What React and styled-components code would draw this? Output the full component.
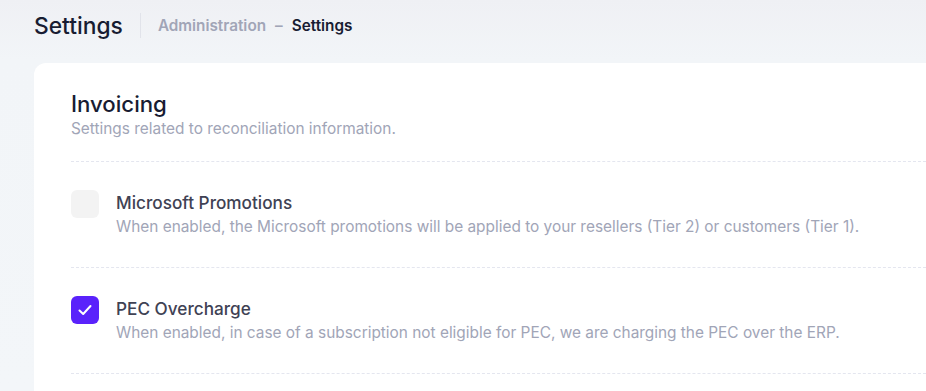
import React from "react";
import styled, { createGlobalStyle } from "styled-components";

const Global = createGlobalStyle`
  html, body { margin: 0; padding: 0; }
  body {
    font-family: Inter, "Noto Sans", sans-serif;
    background: linear-gradient(180deg, #eff0f4 0px, #f2f5f8 60px, #f3f6f9 100%);
    min-height: 391px;
    overflow: hidden;
  }
`;

const Page = styled.div`
  display: flex;
  flex-direction: column;
  padding: 0 0 0 34px;
  min-height: 391px;
`;

const Toolbar = styled.div`
  display: flex;
  align-items: center;
  height: 48px;
  padding-top: 1px;
  margin-bottom: 14px;
`;

const PageTitle = styled.h1`
  margin: 0;
  font-size: 22.8px;
  font-weight: 500;
  color: #181c32;
`;

const Divider = styled.span`
  width: 1px;
  height: 25px;
  background: #e1e3ea;
  margin: 0 17px 0 17px;
`;

const Crumbs = styled.div`
  display: flex;
  align-items: center;
  gap: 9px;
  font-size: 15.3px;
  font-weight: 600;
  padding-top: 1px;
`;

const Crumb = styled.span`
  color: ${(p) => (p.$active ? "#181c32" : "#a1a5b7")};
`;

const Card = styled.div`
  flex: 1;
  background: #ffffff;
  border-radius: 12px 0 0 0;
  padding: 27px 0 0 37px;
`;

const Header = styled.div`
  padding-bottom: 21px;
  border-bottom: 1px dashed #e4e6ef;
`;

const CardTitle = styled.h2`
  margin: 0;
  font-size: 22.2px;
  line-height: 28px;
  font-weight: 500;
  color: #181c32;
`;

const CardSub = styled.div`
  font-size: 15.4px;
  line-height: 22px;
  color: #a1a5b7;
`;

const Row = styled.label`
  display: flex;
  gap: 17px;
  padding: 28px 0 29px;
  border-bottom: 1px dashed #e4e6ef;
`;

const Box = styled.span`
  flex: none;
  width: 28px;
  height: 28px;
  border-radius: 6px;
  margin-top: 0;
  background: ${(p) => (p.$checked ? "#5a22fb" : "#f3f3f3")};
  display: flex;
  align-items: center;
  justify-content: center;
`;

const Text = styled.div`
  display: flex;
  flex-direction: column;
`;

const RowTitle = styled.div`
  font-size: 17.2px;
  font-weight: 500;
  color: #3f4254;
  line-height: 26px;
`;

const RowDesc = styled.div`
  font-size: 15.4px;
  color: #a1a5b7;
  line-height: 22px;
`;

const Check = () => (
  <svg width="18" height="18" viewBox="0 0 18 18" fill="none">
    <path d="M3.5 9.5 L7.2 13 L14.5 5" stroke="#fff" strokeWidth="2" strokeLinecap="round" strokeLinejoin="round" />
  </svg>
);

const items = [
  {
    title: "Microsoft Promotions",
    desc: "When enabled, the Microsoft promotions will be applied to your resellers (Tier 2) or customers (Tier 1).",
    checked: false,
  },
  {
    title: "PEC Overcharge",
    desc: "When enabled, in case of a subscription not eligible for PEC, we are charging the PEC over the ERP.",
    checked: true,
  },
];

export default function App() {
  return (
    <>
      <Global />
      <Page>
        <Toolbar>
          <PageTitle>Settings</PageTitle>
          <Divider />
          <Crumbs>
            <Crumb>Administration</Crumb>
            <Crumb>–</Crumb>
            <Crumb $active>Settings</Crumb>
          </Crumbs>
        </Toolbar>
        <Card>
          <Header>
            <CardTitle>Invoicing</CardTitle>
            <CardSub>Settings related to reconciliation information.</CardSub>
          </Header>
          {items.map((it) => (
            <Row key={it.title}>
              <Box $checked={it.checked}>{it.checked && <Check />}</Box>
              <Text>
                <RowTitle>{it.title}</RowTitle>
                <RowDesc>{it.desc}</RowDesc>
              </Text>
            </Row>
          ))}
        </Card>
      </Page>
    </>
  );
}
